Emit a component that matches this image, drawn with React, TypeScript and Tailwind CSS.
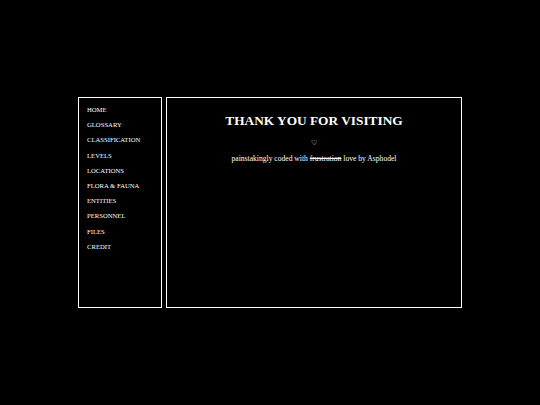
import React from "react";

const items = ["HOME","GLOSSARY","CLASSIFICATION","LEVELS","LOCATIONS","FLORA & FAUNA","ENTITIES","PERSONNEL","FILES","CREDIT"];

export default function App() {
  return (
    <div className="w-[540px] h-[405px] bg-black flex items-center justify-center text-white" style={{fontFamily: '"Liberation Serif", "Times New Roman", serif'}}>
      <div className="flex gap-[4px] h-[211px]">
        <div className="w-[84px] border border-white pl-[8px] pt-[4px]">
          <ul className="flex flex-col">
            {items.map((t) => (
              <li key={t} className="text-[6.67px] leading-[15.2px] whitespace-nowrap">{t}</li>
            ))}
          </ul>
        </div>
        <div className="w-[296px] border border-white flex flex-col items-center pt-[15px]">
          <h1 className="text-[13.33px] font-bold leading-[16px]">THANK YOU FOR VISITING</h1>
          <div className="text-[6.67px] mt-[9px] leading-[10px]">♡</div>
          <p className="text-[7.6px] mt-[6px] leading-[10px]">painstakingly coded with <s>frustration</s> love by Asphodel</p>
        </div>
      </div>
    </div>
  );
}
